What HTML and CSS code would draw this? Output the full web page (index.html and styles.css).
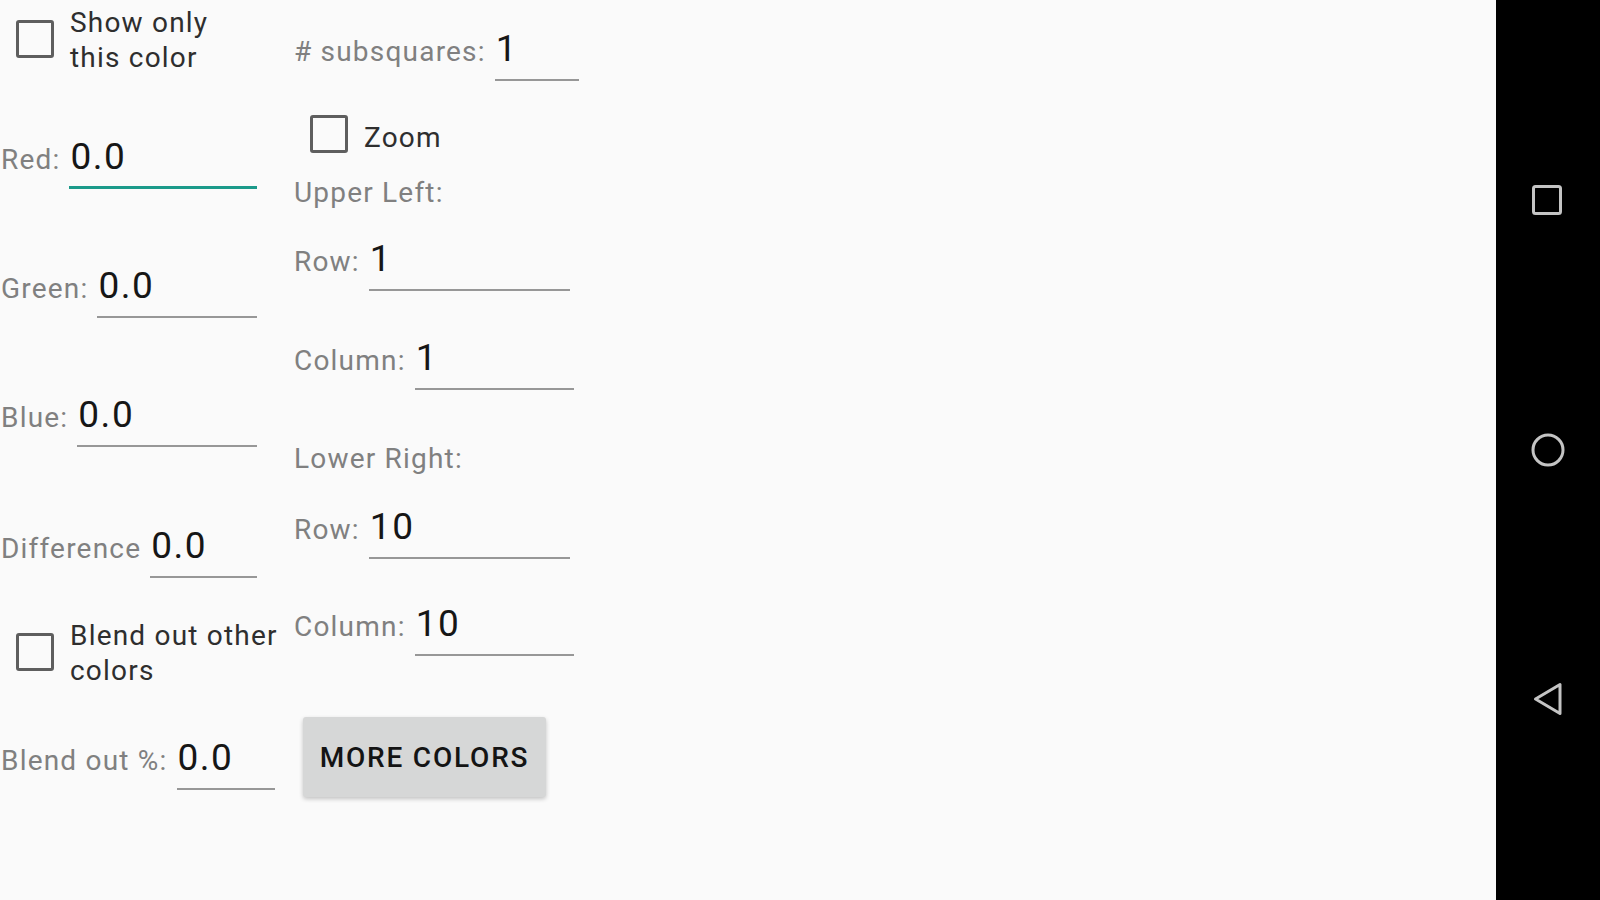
FILE: index.html
```html
<!DOCTYPE html>
<html>
<head>
<meta charset="utf-8">
<link rel="stylesheet" href="styles.css">
</head>
<body>
<div class="screen">
  <main class="app">
    <section class="col col-left">
      <div class="check-row cb-show">
        <span class="box"></span>
        <span class="check-text">Show only<br>this color</span>
      </div>
      <div class="field r-red">
        <span class="label">Red:</span>
        <span class="input focused w-fill">0.0</span>
      </div>
      <div class="field r-green">
        <span class="label">Green:</span>
        <span class="input w-fill">0.0</span>
      </div>
      <div class="field r-blue">
        <span class="label">Blue:</span>
        <span class="input w-fill">0.0</span>
      </div>
      <div class="field r-diff">
        <span class="label">Difference</span>
        <span class="input w-fill">0.0</span>
      </div>
      <div class="check-row cb-blend">
        <span class="box"></span>
        <span class="check-text">Blend out other<br>colors</span>
      </div>
      <div class="field r-blendpct">
        <span class="label">Blend out %:</span>
        <span class="input w-blend">0.0</span>
      </div>
    </section>
    <section class="col col-right">
      <div class="field r-sub">
        <span class="label">#&nbsp;subsquares:</span>
        <span class="input w-sub">1</span>
      </div>
      <div class="check-row cb-zoom">
        <span class="box"></span>
        <span class="check-text single">Zoom</span>
      </div>
      <div class="heading h-upper">Upper Left:</div>
      <div class="field r-ul-row">
        <span class="label">Row:</span>
        <span class="input w-row">1</span>
      </div>
      <div class="field r-ul-col">
        <span class="label">Column:</span>
        <span class="input w-col">1</span>
      </div>
      <div class="heading h-lower">Lower Right:</div>
      <div class="field r-lr-row">
        <span class="label">Row:</span>
        <span class="input w-row">10</span>
      </div>
      <div class="field r-lr-col">
        <span class="label">Column:</span>
        <span class="input w-col">10</span>
      </div>
      <button class="btn">MORE COLORS</button>
    </section>
  </main>
  <nav class="navbar">
    <svg class="nav-icon i-recent" width="36" height="36" viewBox="0 0 36 36"><rect x="3.5" y="4.5" width="27" height="27" rx="2" fill="none" stroke="#c4c4c4" stroke-width="3"/></svg>
    <svg class="nav-icon i-home" width="36" height="36" viewBox="0 0 36 36"><circle cx="18" cy="18" r="15" fill="none" stroke="#c4c4c4" stroke-width="3"/></svg>
    <svg class="nav-icon i-back" width="36" height="36" viewBox="0 0 36 36"><polygon points="5.5,18 30,3.5 30,32.5" fill="none" stroke="#c4c4c4" stroke-width="3" stroke-linejoin="round"/></svg>
  </nav>
</div>
</body>
</html>
```

FILE: styles.css
```css
html, body {
  margin: 0;
  padding: 0;
  width: 1600px;
  height: 900px;
  overflow: hidden;
  background: #fafafa;
  font-family: Roboto, "Liberation Sans", sans-serif;
}

.screen {
  display: flex;
  width: 1600px;
  height: 900px;
}

.app {
  flex: 0 0 1496px;
  display: flex;
  background: #fafafa;
}

.col {
  display: flex;
  flex-direction: column;
  align-items: flex-start;
}

.col-left {
  width: 280px;
  padding-left: 1px;
}

.col-right {
  margin-left: 13px;
}

/* checkbox rows */
.check-row {
  display: flex;
  align-items: center;
}

.box {
  box-sizing: border-box;
  width: 38px;
  height: 38px;
  border: 3.5px solid #5e5e5e;
  border-radius: 3px;
  flex: none;
}

.check-text {
  font-size: 28px;
  line-height: 35px;
  letter-spacing: 1.2px;
  color: #2e2e2e;
  margin-left: 16px;
  white-space: nowrap;
}

.cb-show {
  margin-top: 5px;
  margin-left: 15px;
}

.cb-show .box,
.cb-blend .box {
  margin-top: -3px;
}

.cb-blend {
  margin-top: 40px;
  margin-left: 15px;
}

.cb-zoom {
  margin-top: 34px;
  margin-left: 16px;
  align-items: flex-start;
}

.cb-zoom .check-text {
  margin-top: 5px;
  margin-left: 16px;
}

/* fields */
.field {
  display: flex;
  align-items: baseline;
}

.label {
  font-size: 28px;
  line-height: 35px;
  letter-spacing: 1.2px;
  color: #808080;
  white-space: nowrap;
  margin-right: 9px;
}

.input {
  box-sizing: border-box;
  display: block;
  font-size: 37px;
  line-height: 40px;
  letter-spacing: 1.5px;
  padding: 0 0 10px 1px;
  border-bottom: 2px solid #979797;
  color: #161616;
}

.input.focused {
  border-bottom: 3px solid #1b9a8a;
  padding-bottom: 9px;
}

.w-fill { flex: 1; }
.col-left .field { width: 256px; }
.col-left .r-blendpct { width: auto; }
.w-blend { width: 98px; }
.w-sub { width: 84px; }
.w-row { width: 201px; }
.w-col { width: 159px; }

.r-red { margin-top: 62px; }
.r-green { margin-top: 77px; }
.r-blue { margin-top: 77px; }
.r-diff { margin-top: 79px; }
.r-blendpct { margin-top: 50px; }

.r-sub { margin-top: 29px; }
.r-ul-row { margin-top: 29px; }
.r-ul-col { margin-top: 47px; }
.r-lr-row { margin-top: 31px; }
.r-lr-col { margin-top: 45px; }

.heading {
  font-size: 28px;
  line-height: 35px;
  letter-spacing: 1.2px;
  color: #808080;
}

.h-upper { margin-top: 20px; }
.h-lower { margin-top: 51px; }

/* button */
.btn {
  margin-top: 61px;
  margin-left: 9px;
  width: 243px;
  height: 80px;
  border: none;
  border-radius: 3px;
  background: #d6d7d7;
  box-shadow: 0 2px 4px rgba(0, 0, 0, 0.22);
  font-family: Roboto, "Liberation Sans", sans-serif;
  font-weight: 500;
  font-size: 28px;
  letter-spacing: 1.8px;
  color: #141414;
  padding: 0;
}

/* nav bar */
.navbar {
  flex: 1;
  background: #000;
  display: flex;
  flex-direction: column;
  align-items: center;
}

.nav-icon {
  display: block;
  flex: none;
}

.i-recent { margin-top: 182px; }
.i-home { margin-top: 214px; }
.i-back { margin-top: 213px; }
```
